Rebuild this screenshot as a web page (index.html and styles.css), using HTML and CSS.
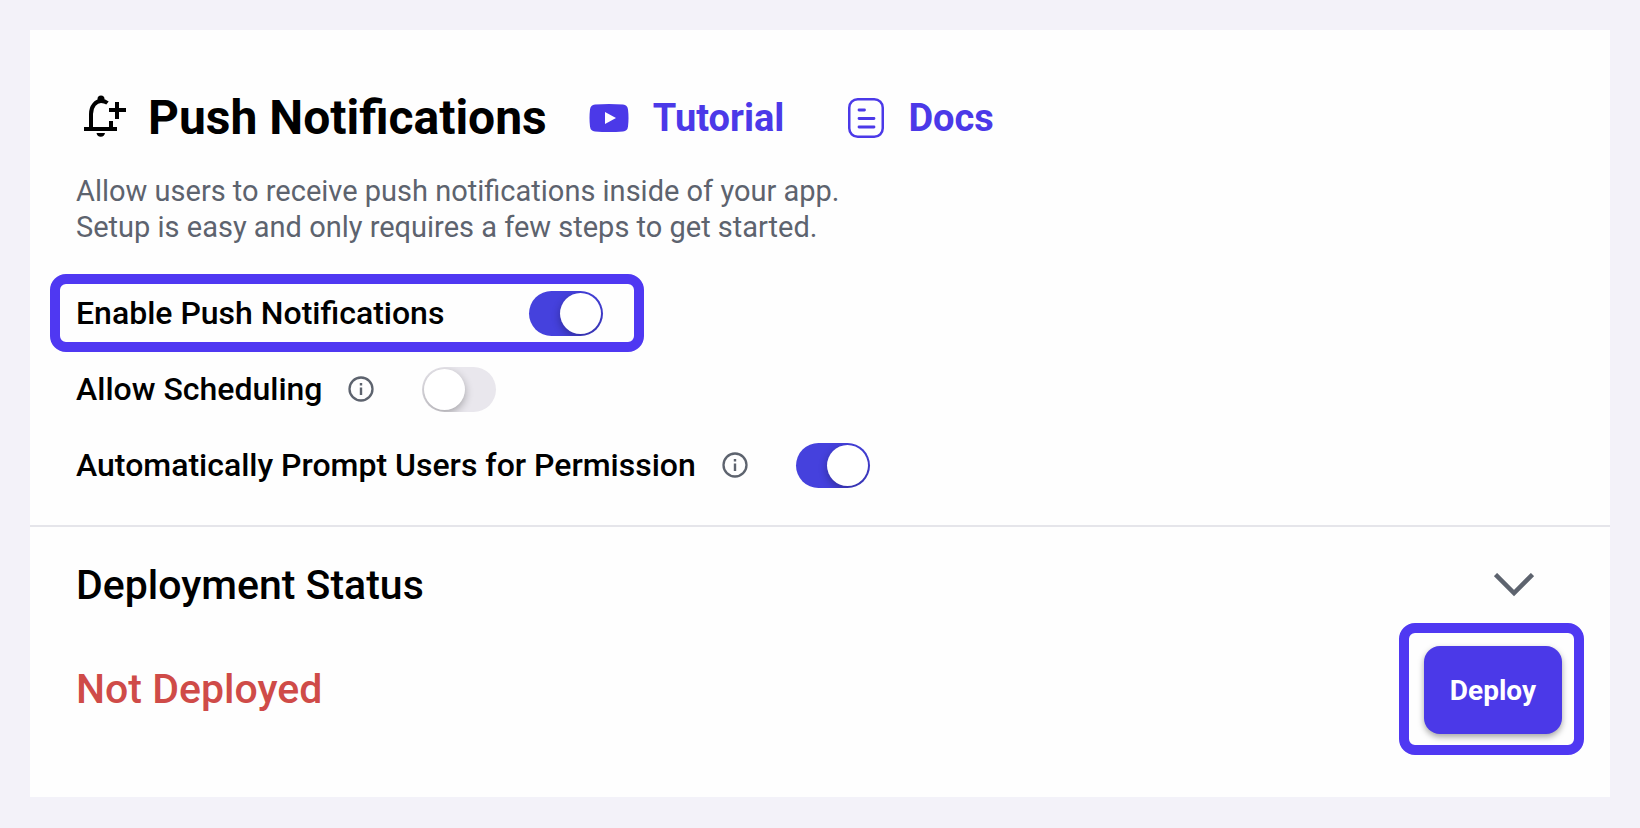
FILE: index.html
```
<!DOCTYPE html>
<html lang="en">
<head>
    <meta charset="UTF-8">
    <meta name="viewport" content="width=device-width, initial-scale=1">
    <title>Push Notifications</title>
    <link rel="stylesheet" href="styles.css">
</head>
<body>
<main class="card">
    <section class="settings">
        <header class="header">
            <svg class="icon-bell" viewBox="0 0 42 42" aria-hidden="true">
                <path d="M7 34V19C7 11 12 6 17 6C19.500 6 21.500 6.500 23.500 8" fill="none" stroke="#000" stroke-width="4"/>
                <path d="M13.500 6V4a3.500 3.500 0 0 1 7 0v2zM0 32h33v4H0zM25 26h4v7h-4zM25 13h17v4H25zM31 7h4v17h-4zM12.500 38h8.500a4.300 4.300 0 0 1-8.500 0z"/>
            </svg>
            <h1 class="title">Push Notifications</h1>
            <a class="link" href="#tutorial">
                <svg class="icon-video" viewBox="0 0 40 28" aria-hidden="true">
                    <path d="M6 .5Q20-.5 34 .5Q38.500 1 39 5.500Q40 14 39 22.500Q38.500 27 34 27.500Q20 28.500 6 27.500Q1.500 27 1 22.500Q0 14 1 5.500Q1.500 1 6 .5z" fill="#4b39e8"/>
                    <path d="M16 8v12l11-6z" fill="#fff"/>
                </svg>
                Tutorial
            </a>
            <a class="link" href="#docs">
                <svg class="icon-docs" viewBox="0 0 36 40" fill="none" stroke="#4b39e8" stroke-linecap="round" aria-hidden="true">
                    <rect x="1.250" y="1.250" width="33.500" height="37.500" rx="8.500" stroke-width="2.500"/>
                    <path d="M11 12h5.500M11 20.500h15M11 29h15" stroke-width="2.800"/>
                </svg>
                Docs
            </a>
        </header>
        <p class="desc">Allow users to receive push notifications inside of your app.<br>Setup is easy and only requires a few steps to get started.</p>
        <div class="option highlight">
            <label for="enable">Enable Push Notifications</label>
            <input class="toggle" type="checkbox" id="enable" checked>
        </div>
        <div class="option">
            <label for="scheduling">Allow Scheduling</label>
            <svg class="icon-info" viewBox="0 0 26 26" aria-hidden="true">
                <circle cx="13" cy="13" r="11.500" fill="none" stroke="#5d636e" stroke-width="2.300"/>
                <path d="M11.800 11.500h2.400V19h-2.400zM11.800 7h2.400v2.400h-2.400z" fill="#5d636e"/>
            </svg>
            <input class="toggle" type="checkbox" id="scheduling">
        </div>
        <div class="option">
            <label for="prompt">Automatically Prompt Users for Permission</label>
            <svg class="icon-info" viewBox="0 0 26 26" aria-hidden="true">
                <circle cx="13" cy="13" r="11.500" fill="none" stroke="#5d636e" stroke-width="2.300"/>
                <path d="M11.800 11.500h2.400V19h-2.400zM11.800 7h2.400v2.400h-2.400z" fill="#5d636e"/>
            </svg>
            <input class="toggle" type="checkbox" id="prompt" checked>
        </div>
    </section>
    <section class="deployment">
        <div class="status-head">
            <h2 class="subtitle">Deployment Status</h2>
            <button class="collapse" type="button" aria-label="Toggle deployment status">
                <svg class="icon-chevron" viewBox="0 0 40 24" aria-hidden="true">
                    <path d="M1.500 1.500L20 20L38.500 1.500" fill="none" stroke="#5d636e" stroke-width="4.500"/>
                </svg>
            </button>
        </div>
        <div class="status-row">
            <p class="status">Not Deployed</p>
            <div class="deploy-box">
                <button class="deploy" type="button">Deploy</button>
            </div>
        </div>
    </section>
</main>
</body>
</html>
```
FILE: styles.css
```
* {
    box-sizing: border-box;
    margin: 0;
}
body {
    min-height: 100vh;
    padding: 30px;
    background-color: #f3f2f9;
    color: #000;
    font-family: Roboto, "Liberation Sans", sans-serif;
}
.card {
    background-color: #fefefe;
}
.settings {
    padding: 58px 46px 22px;
    border-bottom: 2px solid #e5e5ea;
}
.header {
    display: flex;
    align-items: center;
    height: 60px;
}
.icon-bell {
    width: 42px;
    height: 42px;
    margin: 0 22px 4px 8px;
}
.title {
    font-size: 48px;
    font-weight: 700;
    line-height: 60px;
}
.link {
    display: flex;
    align-items: center;
    gap: 24px;
    margin-left: 42px;
    color: #4b39e8;
    font-size: 38px;
    font-weight: 700;
    line-height: 60px;
    text-decoration: none;
}
.link + .link {
    margin-left: 64px;
}
.icon-video {
    width: 40px;
    height: 28px;
}
.icon-docs {
    width: 36px;
    height: 40px;
}
.desc {
    margin: 25px 0 29px;
    color: #5d636e;
    font-size: 29px;
    line-height: 36px;
}
.option {
    display: flex;
    align-items: center;
    height: 76px;
    font-size: 32px;
    font-weight: 500;
}
.highlight {
    width: fit-content;
    height: 78px;
    margin: 0 -26px -1px;
    padding: 0 31px 0 16px;
    border: 10px solid #4f38f2;
    border-radius: 16px;
}
.highlight .toggle {
    margin-left: 85px;
}
.icon-info {
    width: 26px;
    height: 26px;
    margin-left: 26px;
}
.toggle {
    appearance: none;
    display: flex;
    width: 74px;
    height: 45px;
    margin: 0 0 0 48px;
    padding: 2px;
    border-radius: 23px;
    background-color: #e9e7ed;
    overflow: hidden;
    cursor: pointer;
}
.toggle::before {
    content: "";
    width: 41px;
    height: 41px;
    border-radius: 50%;
    background-color: #fff;
    box-shadow: 0 3px 8px rgba(0, 0, 0, .3);
}
.toggle:checked {
    justify-content: flex-end;
    background-color: #4541dd;
}
.deployment {
    padding: 30px 26px 42px 46px;
}
.status-head, .status-row {
    display: flex;
    align-items: center;
    justify-content: space-between;
}
.status-head {
    height: 56px;
    padding-right: 50px;
}
.subtitle, .status {
    font-size: 41px;
    font-weight: 500;
}
.collapse {
    display: flex;
    padding: 0;
    border: 0;
    background: none;
    cursor: pointer;
}
.icon-chevron {
    width: 40px;
    height: 24px;
}
.status-row {
    margin-top: 10px;
}
.status {
    color: #cf4b48;
}
.deploy-box {
    padding: 13px 12px 11px 15px;
    border: 10px solid #4f38f2;
    border-radius: 16px;
}
.deploy {
    height: 88px;
    padding: 0 26px;
    border: 0;
    border-radius: 16px;
    background-color: #4b39e8;
    box-shadow: 0 3px 6px rgba(0, 0, 0, .35);
    color: #fff;
    font-family: inherit;
    font-size: 28px;
    font-weight: 700;
    cursor: pointer;
}
```
